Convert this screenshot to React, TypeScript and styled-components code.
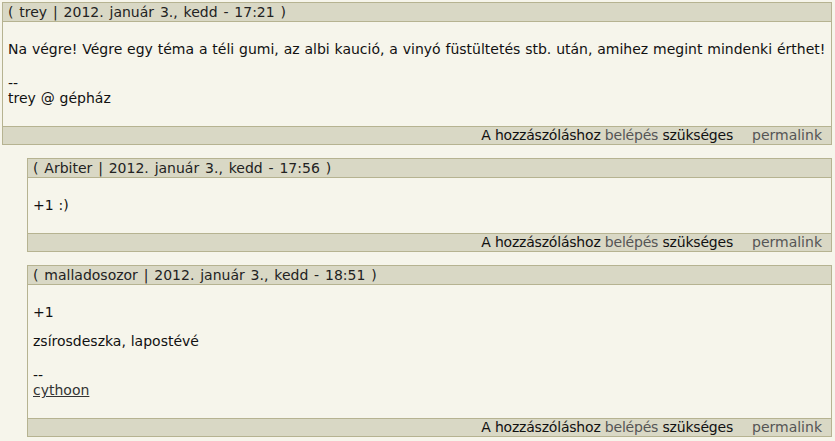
import React from "react";
import styled, { createGlobalStyle } from "styled-components";

const Global = createGlobalStyle`
  html, body {
    margin: 0;
    padding: 0;
    background: #f6f5eb;
  }
  body {
    font-family: "DejaVu Sans", Verdana, sans-serif;
    font-size: 14px;
    line-height: 15px;
    color: #111;
  }
`;

const Page = styled.div`
  padding: 2px 3px 0 2px;
`;

const Thread = styled.div<{ $indent?: boolean }>`
  margin-left: ${(p) => (p.$indent ? "25px" : "0")};
`;

const Comment = styled.div`
  border: 1px solid #b6b391;
  background: #f6f5eb;
  margin-bottom: 13px;
`;

const Header = styled.div`
  background: #d9d8c5;
  border-bottom: 1px solid #b6b391;
  height: 18px;
  line-height: 18px;
  padding: 0 5px;
  color: #222;
  word-spacing: 1.4px;
`;

const Body = styled.div`
  padding: 6px 5px;
  word-spacing: 0.4px;
`;

const P = styled.p`
  margin: 14px 0;
`;

const Sig = styled.div`
  margin: 19px 0 14px;
`;

const SigLink = styled.a`
  color: #333;
  text-decoration: underline;
`;

const Footer = styled.div`
  background: #d9d8c5;
  border-top: 1px solid #b6b391;
  height: 17px;
  line-height: 17px;
  display: flex;
  justify-content: flex-end;
  gap: 19px;
  padding: 0 9px 0 5px;
  color: #111;
`;

const Notice = styled.span`
  letter-spacing: -0.2px;
`;

const Muted = styled.span`
  color: #555;
`;

type C = {
  author: string;
  time: string;
  paras: string[];
  sig?: React.ReactNode;
};

function CommentBox({ c }: { c: C }) {
  return (
    <Comment>
      <Header>( {c.author} | 2012. január 3., kedd - {c.time} )</Header>
      <Body>
        {c.paras.map((t, i) => (
          <P key={i}>{t}</P>
        ))}
        {c.sig && <Sig>--<br />{c.sig}</Sig>}
      </Body>
      <Footer>
        <Notice>
          A hozzászóláshoz <Muted>belépés</Muted> szükséges
        </Notice>
        <Muted>permalink</Muted>
      </Footer>
    </Comment>
  );
}

export default function App() {
  return (
    <Page>
      <Global />
      <Thread>
        <CommentBox
          c={{
            author: "trey",
            time: "17:21",
            paras: [
              "Na végre! Végre egy téma a téli gumi, az albi kaució, a vinyó füstültetés stb. után, amihez megint mindenki érthet!",
            ],
            sig: "trey @ gépház",
          }}
        />
      </Thread>
      <Thread $indent>
        <CommentBox c={{ author: "Arbiter", time: "17:56", paras: ["+1 :)"] }} />
        <CommentBox
          c={{
            author: "malladosozor",
            time: "18:51",
            paras: ["+1", "zsírosdeszka, lapostévé"],
            sig: <SigLink href="#">cythoon</SigLink>,
          }}
        />
      </Thread>
    </Page>
  );
}
